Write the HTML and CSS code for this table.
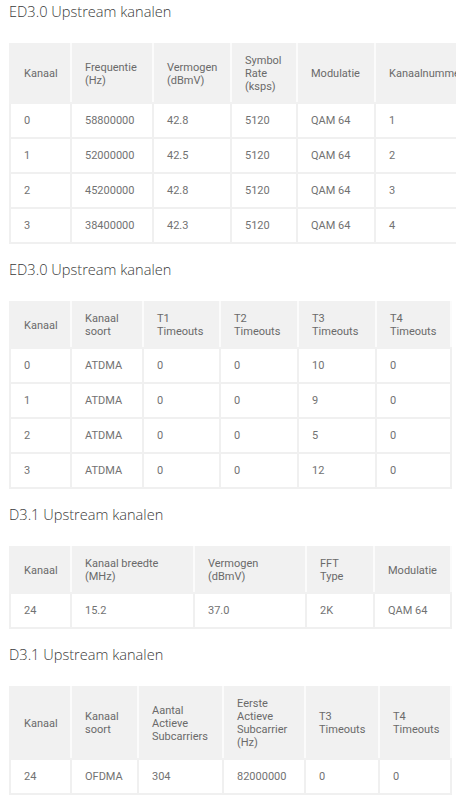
FILE: index.html
```html
<!DOCTYPE html>
<html lang="nl">
<head>
<meta charset="utf-8">
<title>Upstream kanalen</title>
<link rel="stylesheet" href="styles.css">
</head>
<body>
<section class="block">
  <h2 class="title">ED3.0 Upstream kanalen</h2>
  <table class="grid grid-wide">
    <colgroup>
      <col class="c61"><col class="c82"><col class="c78"><col class="c66"><col class="c78"><col class="c104">
    </colgroup>
    <thead>
      <tr><th>Kanaal</th><th>Frequentie<br>(Hz)</th><th>Vermogen<br>(dBmV)</th><th>Symbol<br>Rate<br>(ksps)</th><th>Modulatie</th><th>Kanaalnummer</th></tr>
    </thead>
    <tbody>
      <tr><td>0</td><td>58800000</td><td>42.8</td><td>5120</td><td>QAM 64</td><td>1</td></tr>
      <tr><td>1</td><td>52000000</td><td>42.5</td><td>5120</td><td>QAM 64</td><td>2</td></tr>
      <tr><td>2</td><td>45200000</td><td>42.8</td><td>5120</td><td>QAM 64</td><td>3</td></tr>
      <tr><td>3</td><td>38400000</td><td>42.3</td><td>5120</td><td>QAM 64</td><td>4</td></tr>
    </tbody>
  </table>
</section>

<section class="block">
  <h2 class="title">ED3.0 Upstream kanalen</h2>
  <table class="grid">
    <colgroup>
      <col class="c61"><col class="c72"><col class="c77"><col class="c78"><col class="c78"><col class="c75">
    </colgroup>
    <thead>
      <tr><th>Kanaal</th><th>Kanaal<br>soort</th><th>T1<br>Timeouts</th><th>T2<br>Timeouts</th><th>T3<br>Timeouts</th><th>T4<br>Timeouts</th></tr>
    </thead>
    <tbody>
      <tr><td>0</td><td>ATDMA</td><td>0</td><td>0</td><td>10</td><td>0</td></tr>
      <tr><td>1</td><td>ATDMA</td><td>0</td><td>0</td><td>9</td><td>0</td></tr>
      <tr><td>2</td><td>ATDMA</td><td>0</td><td>0</td><td>5</td><td>0</td></tr>
      <tr><td>3</td><td>ATDMA</td><td>0</td><td>0</td><td>12</td><td>0</td></tr>
    </tbody>
  </table>
</section>

<section class="block">
  <h2 class="title">D3.1 Upstream kanalen</h2>
  <table class="grid">
    <colgroup>
      <col class="c61"><col class="c123"><col class="c112"><col class="c68"><col class="c77">
    </colgroup>
    <thead>
      <tr><th>Kanaal</th><th>Kanaal breedte<br>(MHz)</th><th>Vermogen<br>(dBmV)</th><th>FFT<br>Type</th><th>Modulatie</th></tr>
    </thead>
    <tbody>
      <tr><td>24</td><td>15.2</td><td>37.0</td><td>2K</td><td>QAM 64</td></tr>
    </tbody>
  </table>
</section>

<section class="block">
  <h2 class="title">D3.1 Upstream kanalen</h2>
  <table class="grid">
    <colgroup>
      <col class="c61"><col class="c67"><col class="c85"><col class="c82"><col class="c74"><col class="c72">
    </colgroup>
    <thead>
      <tr><th>Kanaal</th><th>Kanaal<br>soort</th><th>Aantal<br>Actieve<br>Subcarriers</th><th>Eerste<br>Actieve<br>Subcarrier<br>(Hz)</th><th>T3<br>Timeouts</th><th>T4<br>Timeouts</th></tr>
    </thead>
    <tbody>
      <tr><td>24</td><td>OFDMA</td><td>304</td><td>82000000</td><td>0</td><td>0</td></tr>
    </tbody>
  </table>
</section>
</body>
</html>
```

FILE: styles.css
```css
html, body {
  margin: 0;
  background: #ffffff;
}

body {
  padding: 2px 0 0 9px;
  font-family: Roboto, "Open Sans", sans-serif;
  color: #6b6b6b;
  overflow-x: hidden;
}

.block {
  margin-bottom: 16px;
}

.title {
  margin: 0 0 22px;
  font-family: "Open Sans", "Noto Sans", sans-serif;
  font-size: 14.6px;
  line-height: 19px;
  font-weight: 300;
  color: #3a3a3a;
}

.grid {
  border-collapse: collapse;
  table-layout: fixed;
  width: 441px;
  font-size: 11px;
  line-height: 13px;
}

.grid-wide {
  width: 469px;
}

.grid th,
.grid td {
  padding: 10px 13px;
  text-align: left;
  vertical-align: middle;
  white-space: nowrap;
  overflow: hidden;
}

.grid th {
  padding-top: 9px;
  padding-bottom: 9px;
  font-weight: 400;
  color: #6a6a6a;
  background: #f1f1f1;
  border: 2px solid #f1f1f1;
  border-right-color: #fbfbfb;
  border-left-color: #fbfbfb;
}

.grid th:first-child {
  border-left-color: #f1f1f1;
}

.grid td {
  color: #727272;
  border: 2px solid #f0f0f0;
}

.c61 { width: 61px; }
.c66 { width: 66px; }
.c67 { width: 67px; }
.c68 { width: 68px; }
.c72 { width: 72px; }
.c74 { width: 74px; }
.c75 { width: 75px; }
.c77 { width: 77px; }
.c78 { width: 78px; }
.c82 { width: 82px; }
.c85 { width: 85px; }
.c104 { width: 104px; }
.c112 { width: 112px; }
.c123 { width: 123px; }
```
